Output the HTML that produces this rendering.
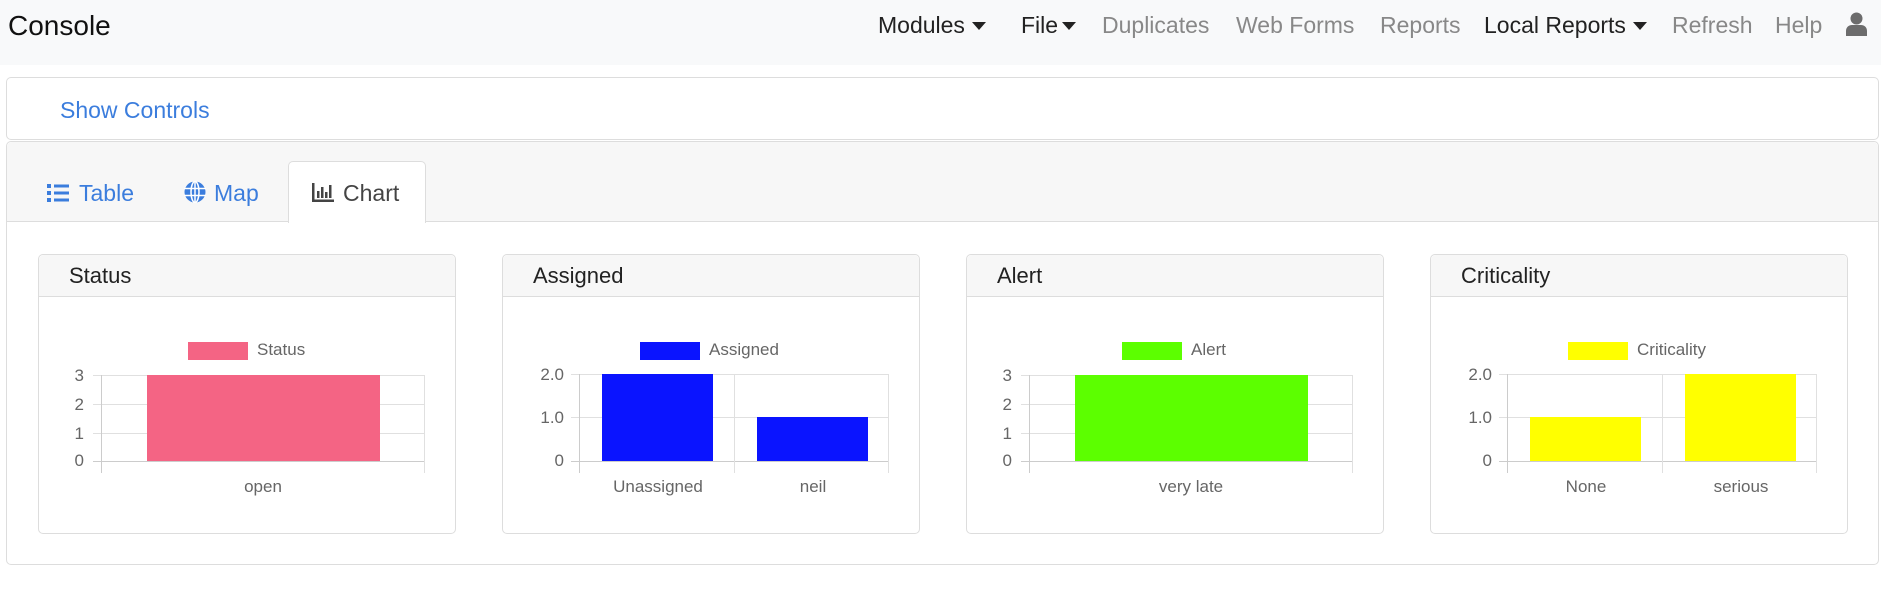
<!DOCTYPE html>
<html><head><meta charset="utf-8"><style>
*{margin:0;padding:0;box-sizing:border-box}
body{width:1881px;height:593px;background:#fff;font-family:"Liberation Sans",sans-serif;position:relative;overflow:hidden}
.a{position:absolute;white-space:nowrap}
.nav{left:0;top:0;width:1881px;height:65px;background:#f8f9fa}
.ni{font-size:23px;top:12px;color:#888}
.nd{color:#222}
.car{display:inline-block;width:0;height:0;border-left:7px solid transparent;border-right:7px solid transparent;border-top:8px solid #222;vertical-align:3px;margin-left:7px}
.card{position:absolute;border:1px solid #ddd;border-radius:5px;background:#fff}
.hdr{position:absolute;left:0;top:0;right:0;height:42px;background:#f7f7f7;border-bottom:1px solid #ddd;border-radius:5px 5px 0 0;font-size:22px;color:#222;padding:8px 0 0 30px}
svg text{font-family:"Liberation Sans",sans-serif;fill:#666}
</style></head><body>
<div class="a nav"></div>
<div class="a" style="left:8px;top:10px;font-size:28px;color:#111">Console</div>
<div class="a ni nd" style="left:878px">Modules<span class="car"></span></div>
<div class="a ni nd" style="left:1021px">File<span class="car" style="margin-left:4px"></span></div>
<div class="a ni" style="left:1102px">Duplicates</div>
<div class="a ni" style="left:1236px">Web Forms</div>
<div class="a ni" style="left:1380px">Reports</div>
<div class="a ni nd" style="left:1484px">Local Reports<span class="car"></span></div>
<div class="a ni" style="left:1672px">Refresh</div>
<div class="a ni" style="left:1775px">Help</div>
<svg class="a" style="left:1845px;top:12px" width="23" height="24" viewBox="0 0 23 24"><circle cx="11.5" cy="6.5" r="6" fill="#6c6c6c"/><path d="M1 24v-5c0-4 3-6 6-6h9c3 0 6 2 6 6v5z" fill="#6c6c6c"/></svg>

<div class="card" style="left:6px;top:77px;width:1873px;height:63px"></div>
<div class="a" style="left:60px;top:97px;font-size:23px;color:#3b7ddd">Show Controls</div>

<div class="card" style="left:6px;top:141px;width:1873px;height:424px;border-radius:5px"></div>
<div class="a" style="left:7px;top:142px;width:1871px;height:80px;background:#f7f7f7;border-bottom:1px solid #ddd;border-radius:5px 5px 0 0"></div>
<div class="a" style="left:288px;top:161px;width:138px;height:62px;background:#fff;border:1px solid #ddd;border-bottom:none;border-radius:5px 5px 0 0"></div>
<svg class="a" style="left:47px;top:183px" width="22" height="20" viewBox="0 0 22 20"><g fill="#3b7ddd"><rect x="0" y="1" width="4" height="4"/><rect x="0" y="8" width="4" height="4"/><rect x="0" y="15" width="4" height="4"/><rect x="7" y="1.5" width="15" height="3"/><rect x="7" y="8.5" width="15" height="3"/><rect x="7" y="15.5" width="15" height="3"/></g></svg>
<div class="a" style="left:79px;top:180px;font-size:23px;color:#3b7ddd">Table</div>
<svg class="a" style="left:184px;top:181px" width="22" height="22" viewBox="0 0 22 22"><circle cx="11" cy="11" r="10.5" fill="#3b7ddd"/><g stroke="#fff" stroke-width="1.5" fill="none"><ellipse cx="11" cy="11" rx="4" ry="10.5"/><line x1="11" y1="0" x2="11" y2="22"/><line x1="0" y1="7.5" x2="22" y2="7.5"/><line x1="0" y1="14.5" x2="22" y2="14.5"/></g></svg>
<div class="a" style="left:214px;top:180px;font-size:23px;color:#3b7ddd">Map</div>
<svg class="a" style="left:312px;top:183px" width="22" height="19" viewBox="0 0 22 19"><g fill="#444"><rect x="0" y="0" width="2.5" height="19"/><rect x="0" y="16.5" width="22" height="2.5"/><rect x="5" y="8" width="2.5" height="7"/><rect x="9" y="4" width="2.5" height="11"/><rect x="13" y="9" width="2.5" height="6"/><rect x="17" y="2" width="2.5" height="13"/></g></svg>
<div class="a" style="left:343px;top:180px;font-size:23px;color:#444">Chart</div>

<!-- Status -->
<div class="card" style="left:38px;top:254px;width:418px;height:280px">
<div class="hdr">Status</div>
<svg class="a" style="left:0;top:0" width="418" height="280" viewBox="0 0 418 280">
<rect x="149" y="87" width="60" height="18" fill="#f46484"/><text x="218" y="100" font-size="17">Status</text>
<g stroke="#e0e0e0" stroke-width="1"><line x1="54" y1="120.5" x2="386" y2="120.5"/><line x1="54" y1="149.5" x2="386" y2="149.5"/><line x1="54" y1="178.5" x2="386" y2="178.5"/><line x1="54" y1="206.5" x2="386" y2="206.5" stroke="#ccc"/><line x1="62.5" y1="120" x2="62.5" y2="218" stroke="#ccc"/><line x1="385.5" y1="120" x2="385.5" y2="218"/></g>
<rect x="108" y="120" width="233" height="86" fill="#f46484"/>
<g font-size="17" text-anchor="end"><text x="45" y="126">3</text><text x="45" y="155">2</text><text x="45" y="184">1</text><text x="45" y="211">0</text></g>
<text x="224" y="237" font-size="17" text-anchor="middle">open</text>
</svg></div>

<!-- Assigned -->
<div class="card" style="left:502px;top:254px;width:418px;height:280px">
<div class="hdr">Assigned</div>
<svg class="a" style="left:0;top:0" width="418" height="280" viewBox="0 0 418 280">
<rect x="137" y="87" width="60" height="18" fill="#0a14ff"/><text x="206" y="100" font-size="17">Assigned</text>
<g stroke="#e0e0e0" stroke-width="1"><line x1="68" y1="119.5" x2="386" y2="119.5"/><line x1="68" y1="162.5" x2="386" y2="162.5"/><line x1="68" y1="206.5" x2="386" y2="206.5" stroke="#ccc"/><line x1="76.5" y1="119" x2="76.5" y2="218" stroke="#ccc"/><line x1="231.5" y1="119" x2="231.5" y2="218"/><line x1="385.5" y1="119" x2="385.5" y2="218"/></g>
<rect x="99" y="119" width="111" height="87" fill="#0a14ff"/><rect x="254" y="162" width="111" height="44" fill="#0a14ff"/>
<g font-size="17" text-anchor="end"><text x="61" y="125">2.0</text><text x="61" y="168">1.0</text><text x="61" y="211">0</text></g>
<text x="155" y="237" font-size="17" text-anchor="middle">Unassigned</text><text x="310" y="237" font-size="17" text-anchor="middle">neil</text>
</svg></div>

<!-- Alert -->
<div class="card" style="left:966px;top:254px;width:418px;height:280px">
<div class="hdr">Alert</div>
<svg class="a" style="left:0;top:0" width="418" height="280" viewBox="0 0 418 280">
<rect x="155" y="87" width="60" height="18" fill="#5cff00"/><text x="224" y="100" font-size="17">Alert</text>
<g stroke="#e0e0e0" stroke-width="1"><line x1="54" y1="120.5" x2="386" y2="120.5"/><line x1="54" y1="149.5" x2="386" y2="149.5"/><line x1="54" y1="178.5" x2="386" y2="178.5"/><line x1="54" y1="206.5" x2="386" y2="206.5" stroke="#ccc"/><line x1="62.5" y1="120" x2="62.5" y2="218" stroke="#ccc"/><line x1="385.5" y1="120" x2="385.5" y2="218"/></g>
<rect x="108" y="120" width="233" height="86" fill="#5cff00"/>
<g font-size="17" text-anchor="end"><text x="45" y="126">3</text><text x="45" y="155">2</text><text x="45" y="184">1</text><text x="45" y="211">0</text></g>
<text x="224" y="237" font-size="17" text-anchor="middle">very late</text>
</svg></div>

<!-- Criticality -->
<div class="card" style="left:1430px;top:254px;width:418px;height:280px">
<div class="hdr">Criticality</div>
<svg class="a" style="left:0;top:0" width="418" height="280" viewBox="0 0 418 280">
<rect x="137" y="87" width="60" height="18" fill="#ffff00"/><text x="206" y="100" font-size="17">Criticality</text>
<g stroke="#e0e0e0" stroke-width="1"><line x1="68" y1="119.5" x2="386" y2="119.5"/><line x1="68" y1="162.5" x2="386" y2="162.5"/><line x1="68" y1="206.5" x2="386" y2="206.5" stroke="#ccc"/><line x1="76.5" y1="119" x2="76.5" y2="218" stroke="#ccc"/><line x1="231.5" y1="119" x2="231.5" y2="218"/><line x1="385.5" y1="119" x2="385.5" y2="218"/></g>
<rect x="99" y="162" width="111" height="44" fill="#ffff00"/><rect x="254" y="119" width="111" height="87" fill="#ffff00"/>
<g font-size="17" text-anchor="end"><text x="61" y="125">2.0</text><text x="61" y="168">1.0</text><text x="61" y="211">0</text></g>
<text x="155" y="237" font-size="17" text-anchor="middle">None</text><text x="310" y="237" font-size="17" text-anchor="middle">serious</text>
</svg></div>
</body></html>
